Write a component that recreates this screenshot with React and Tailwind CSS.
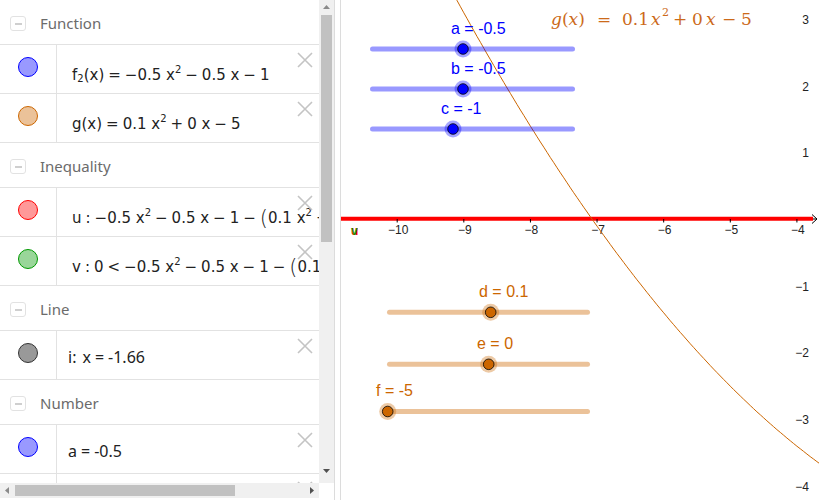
import React from 'react'

const X0 = 1063.4
const UX = 66.62
const Y0 = 219.5
const UY = 66.67
const sx = (v) => X0 + v * UX
const sy = (v) => Y0 - v * UY

const Op = ({ children }) => <span className="mx-[4px]">{children}</span>

const CloseX = () => (
  <svg viewBox="0 0 16 16" className="absolute right-[6px] top-[7px] h-[16px] w-[16px]">
    <path d="M1 1 L15 15 M15 1 L1 15" stroke="#c4c4c4" strokeWidth="1.6" fill="none" />
  </svg>
)

function Header({ label }) {
  return (
    <div className="flex h-[45px] items-center border-b border-[#e2e2e2] pl-[10px] pt-[3px]">
      <span className="flex h-[15px] w-[16px] items-center justify-center rounded-[3px] border border-[#e2e2e2]">
        <span className="h-[2px] w-[7px] bg-[#cfcfcf]" />
      </span>
      <span className="ml-[14px] font-['Noto_Sans',sans-serif] text-[15px] text-[#6b6b6b]">{label}</span>
    </div>
  )
}

function Row({ dot, math, children }) {
  return (
    <div className="relative flex h-[49px] shrink-0 border-b border-[#e2e2e2]">
      <div className="flex w-[57px] shrink-0 items-center justify-center border-r border-[#e2e2e2] pb-[4px]">
        <span className={`h-[20px] w-[20px] rounded-full border ${dot}`} />
      </div>
      {math ? (
        <div className="flex items-center whitespace-nowrap pl-[15px] pt-[12px] font-['DejaVu_Sans',sans-serif] text-[15px] text-[#222]">
          {children}
        </div>
      ) : (
        <div className="flex items-center whitespace-nowrap pl-[11px] pt-[3px] font-['Noto_Sans',sans-serif] text-[16px] text-[#222]">
          {children}
        </div>
      )}
      <CloseX />
    </div>
  )
}

const Sq = () => <sup className="text-[10px]">2</sup>

function AlgebraList() {
  return (
    <div className="flex flex-col">
      <Header label="Function" />
      <Row dot="border-[#0000ff] bg-[#9999ff]" math>
        <span>
          f<sub className="text-[10px]">2</sub>(x)
        </span>
        <Op>=</Op>
        <span>−0.5 x</span>
        <Sq />
        <Op>−</Op>
        <span>0.5 x</span>
        <Op>−</Op>
        <span>1</span>
      </Row>
      <Row dot="border-[#cc6600] bg-[#ebc299]" math>
        <span>g(x)</span>
        <Op>=</Op>
        <span>0.1 x</span>
        <Sq />
        <Op>+</Op>
        <span>0 x</span>
        <Op>−</Op>
        <span>5</span>
      </Row>
      <Header label="Inequality" />
      <Row dot="border-[#ff0000] bg-[#ff9999]" math>
        <span>u</span>
        <Op>:</Op>
        <span>−0.5 x</span>
        <Sq />
        <Op>−</Op>
        <span>0.5 x</span>
        <Op>−</Op>
        <span>1</span>
        <Op>−</Op>
        <span className="text-[21px] font-light leading-none">(</span>
        <span>0.1 x</span>
        <Sq />
        <Op>+</Op>
        <span>0 x</span>
      </Row>
      <Row dot="border-[#009900] bg-[#99d699]" math>
        <span>v</span>
        <Op>:</Op>
        <span>0</span>
        <Op>&lt;</Op>
        <span>−0.5 x</span>
        <Sq />
        <Op>−</Op>
        <span>0.5 x</span>
        <Op>−</Op>
        <span>1</span>
        <Op>−</Op>
        <span className="text-[21px] font-light leading-none">(</span>
        <span>0.1 x</span>
        <Sq />
      </Row>
      <Header label="Line" />
      <Row dot="border-[#333333] bg-[#999999]">
        <span>i:</span>
        <span className="ml-[6px]">x</span>
        <Op>=</Op>
        <span>-1.66</span>
      </Row>
      <Header label="Number" />
      <Row dot="border-[#0000ff] bg-[#9999ff]">
        <span>a</span>
        <Op>=</Op>
        <span>-0.5</span>
      </Row>
      <Row dot="border-[#0000ff] bg-[#9999ff]">
        <span>b</span>
        <Op>=</Op>
        <span>-0.5</span>
      </Row>
    </div>
  )
}

function Slider({ x1, x2, y, kx, color, label, lx, ly }) {
  return (
    <g>
      <line x1={x1 + 2.5} x2={x2 - 2.5} y1={y} y2={y} stroke={color} strokeOpacity="0.4" strokeWidth="5" strokeLinecap="round" />
      <circle cx={kx} cy={y} r="8.5" fill={color} fillOpacity="0.35" />
      <circle cx={kx} cy={y} r="5.3" fill={color} stroke="#000" strokeWidth="0.8" />
      <text x={lx} y={ly} fill={color} fontSize="16" fontFamily="'Liberation Sans', Arial, sans-serif">
        {label}
      </text>
    </g>
  )
}

function Graph() {
  const pts = []
  for (let v = -10.6; v <= -3.3; v += 0.05) {
    pts.push(`${sx(v).toFixed(1)},${sy(0.1 * v * v - 5).toFixed(1)}`)
  }
  const xs = [-10, -9, -8, -7, -6, -5, -4]
  const ys = [3, 2, 1, -1, -2, -3, -4]
  const lab = "'Liberation Sans', Arial, sans-serif"
  const serif = "'DejaVu Serif', 'Liberation Serif', serif"

  return (
    <svg viewBox="341 0 478 500" className="h-[500px] w-[478px]">
      {/* axis */}
      <line x1="341" x2="816" y1="219" y2="219" stroke="#000" strokeWidth="1" />
      <line x1="341" x2="813" y1="218.7" y2="218.7" stroke="#ff0000" strokeWidth="4" />
      <path d="M812 214.5 L817 219 L812 223.5" stroke="#000" strokeWidth="1" fill="none" />
      {xs.map((k) => (
        <g key={k}>
          <line x1={sx(k)} x2={sx(k)} y1="219" y2="222.5" stroke="#000" strokeWidth="1" />
          <text x={sx(k) + 1} y="234" textAnchor="middle" fontSize="12" fill="#222" fontFamily={lab}>
            {'−' + Math.abs(k)}
          </text>
        </g>
      ))}
      {ys.map((k) => (
        <text key={k} x="809" y={sy(k) + 4.5} textAnchor="end" fontSize="12" fill="#222" fontFamily={lab}>
          {k < 0 ? '−' + Math.abs(k) : k}
        </text>
      ))}
      <text x="351" y="235" fontSize="12" fontWeight="bold" fill="#ff0000" fontFamily={lab}>u</text>
      <text x="351" y="235" fontSize="12" fontWeight="bold" fill="#009900" fillOpacity="0.85" fontFamily={lab}>v</text>

      {/* g(x) */}
      <polyline points={pts.join(' ')} fill="none" stroke="#cc6600" strokeWidth="1" />
      <text y="25" fill="#cc6a1a" fontSize="17" fontFamily={serif}>
        <tspan x="551" fontStyle="italic">g</tspan>
        <tspan>(</tspan>
        <tspan fontStyle="italic">x</tspan>
        <tspan>)</tspan>
        <tspan x="597">=</tspan>
        <tspan x="622">0.1</tspan>
        <tspan x="651" fontStyle="italic">x</tspan>
        <tspan x="662" y="16" fontSize="11">2</tspan>
        <tspan x="673" y="25">+</tspan>
        <tspan x="692">0</tspan>
        <tspan x="706" fontStyle="italic">x</tspan>
        <tspan x="722">−</tspan>
        <tspan x="741">5</tspan>
      </text>

      {/* sliders */}
      <Slider x1={370} x2={575} y={49} kx={463} color="#0000ff" label="a = -0.5" lx={451} ly={34} />
      <Slider x1={370} x2={575} y={89} kx={463} color="#0000ff" label="b = -0.5" lx={451} ly={74} />
      <Slider x1={370} x2={575} y={129} kx={453} color="#0000ff" label="c = -1" lx={441} ly={114} />
      <Slider x1={387} x2={590} y={312.3} kx={490.7} color="#cc6600" label="d = 0.1" lx={479} ly={297} />
      <Slider x1={387} x2={590} y={364.3} kx={488.7} color="#cc6600" label="e = 0" lx={477} ly={349} />
      <Slider x1={387} x2={590} y={411.5} kx={387.7} color="#cc6600" label="f = -5" lx={376} ly={396} />
    </svg>
  )
}

export default function App() {
  return (
    <div className="flex h-[500px] w-[819px] overflow-hidden bg-white">
      <div className="flex w-[335px] shrink-0 flex-col border-r border-[#dcdcdc]">
        <div className="flex min-h-0 flex-1">
          <div className="w-[319px] overflow-hidden">
            <AlgebraList />
          </div>
          <div className="flex w-[15px] flex-col bg-[#f0f0f0]">
            <svg viewBox="0 0 15 15" className="h-[15px] w-[15px]">
              <path d="M4 9 L11 9 L7.5 5 Z" fill="#8a8a8a" />
            </svg>
            <div className="ml-[2px] h-[227px] w-[11px] bg-[#c1c1c1]" />
            <svg viewBox="0 0 15 15" className="mb-[4px] mt-auto h-[15px] w-[15px]">
              <path d="M4 5 L11 5 L7.5 9 Z" fill="#505050" />
            </svg>
          </div>
        </div>
        <div className="flex h-[17px]">
          <div className="flex h-[15px] w-[319px] items-center bg-[#f0f0f0]">
            <svg viewBox="0 0 15 15" className="h-[15px] w-[15px]">
              <path d="M9 4 L9 11 L5 7.5 Z" fill="#8a8a8a" />
            </svg>
            <div className="h-[11px] w-[220px] bg-[#c1c1c1]" />
            <svg viewBox="0 0 15 15" className="ml-auto h-[15px] w-[15px]">
              <path d="M6 4 L6 11 L10 7.5 Z" fill="#505050" />
            </svg>
          </div>
        </div>
      </div>
      <div className="w-[6px] shrink-0 border-r border-[#dcdcdc]" />
      <div className="flex-1">
        <Graph />
      </div>
    </div>
  )
}
